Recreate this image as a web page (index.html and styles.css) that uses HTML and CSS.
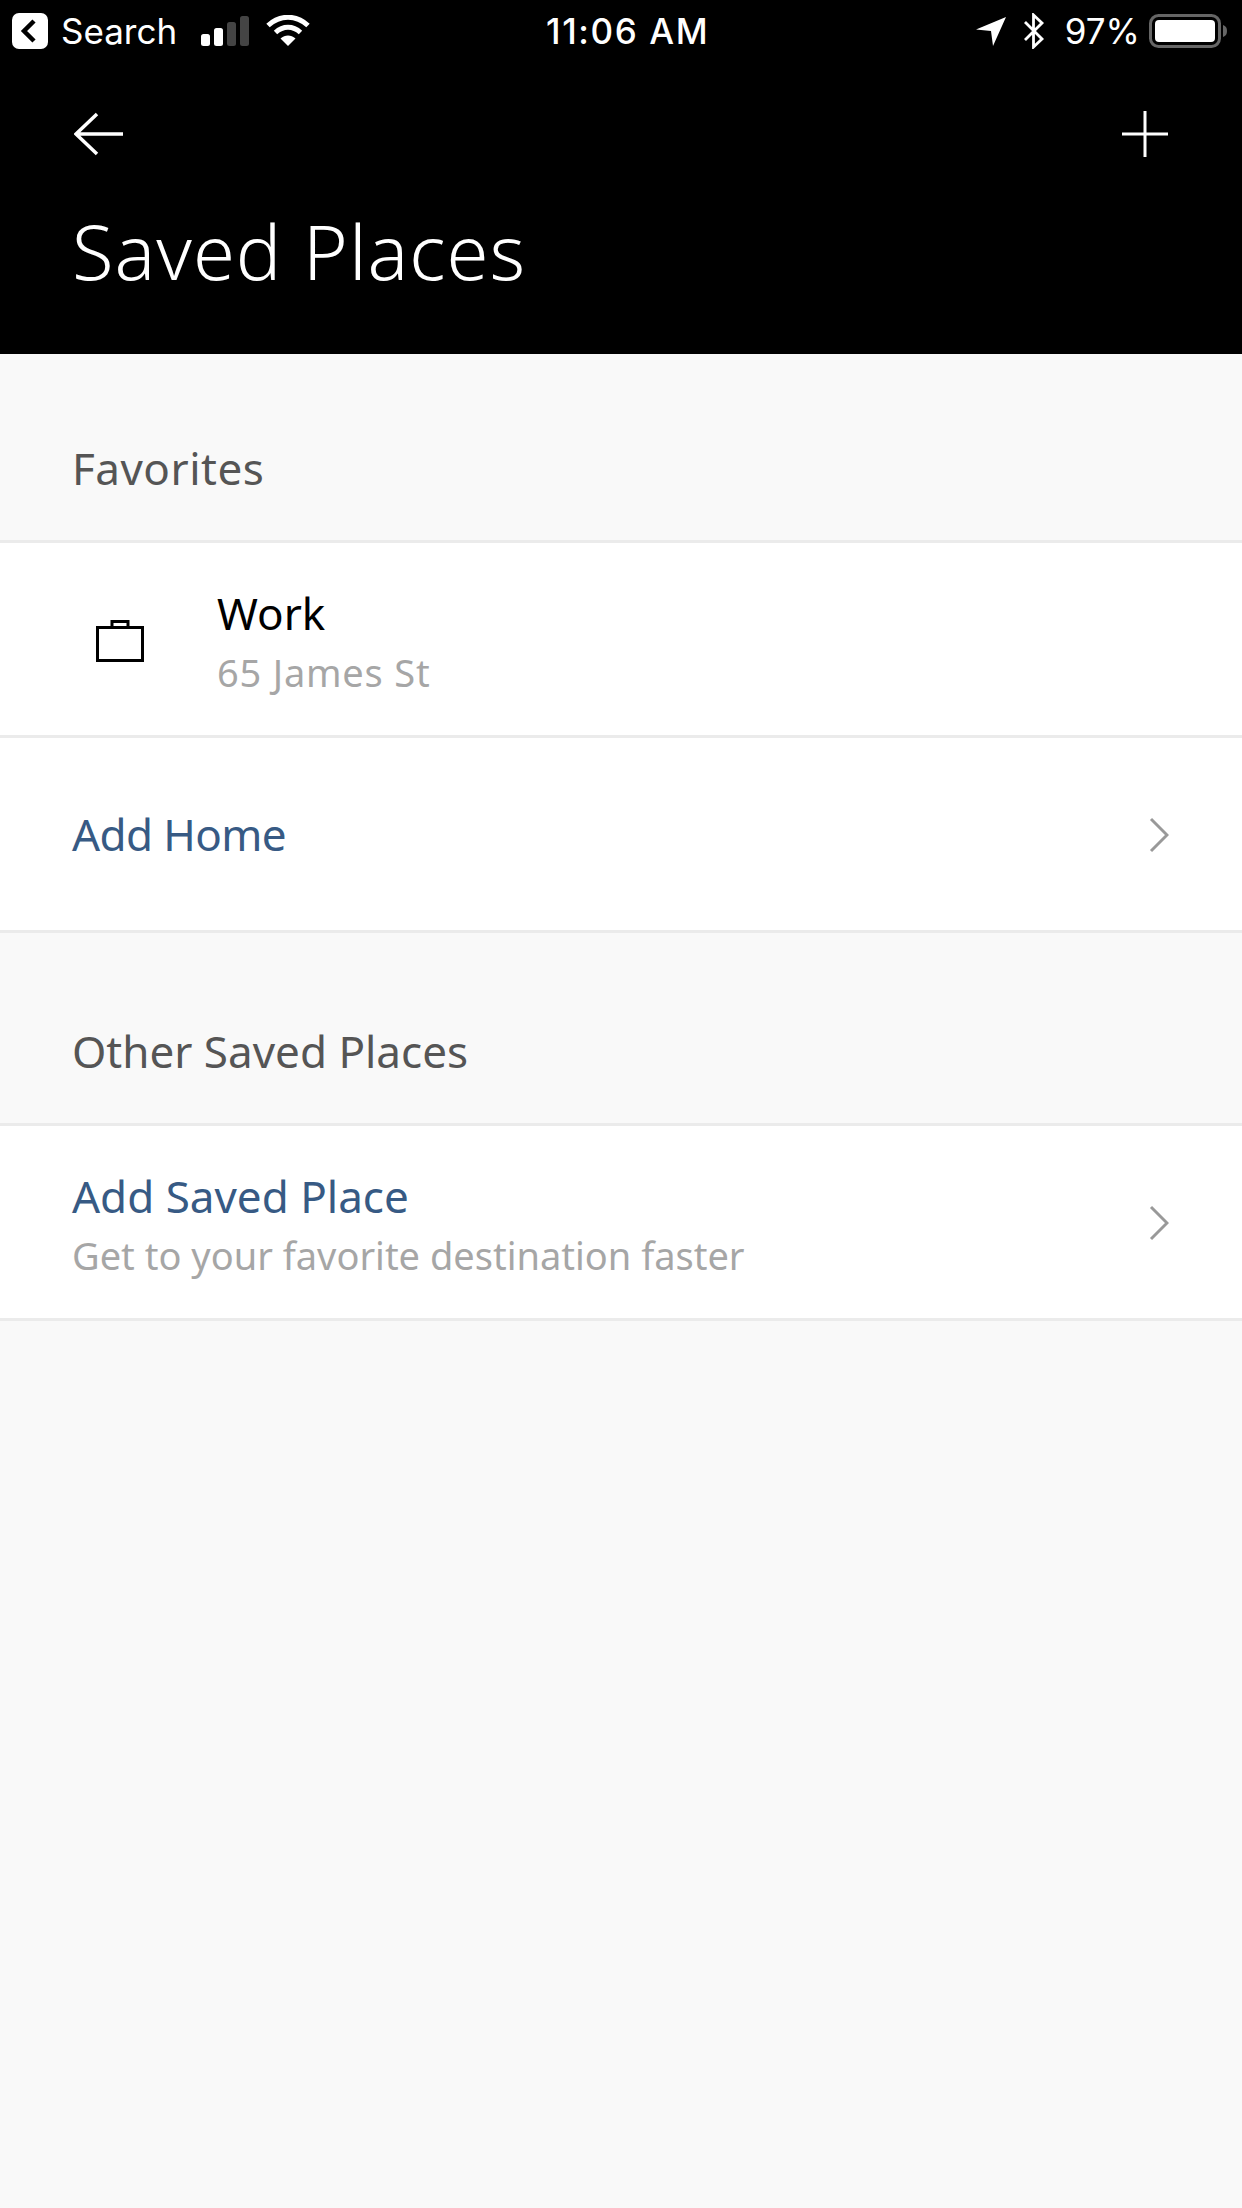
FILE: index.html
```html
<!DOCTYPE html>
<html lang="en">
<head>
<meta charset="utf-8">
<title>Saved Places</title>
<link rel="stylesheet" href="styles.css">
</head>
<body>
<header class="header">
  <div class="status">
    <div class="status-left">
      <svg class="ic-back" viewBox="0 0 36 36"><rect width="36" height="36" rx="7" fill="#fff"/><path d="M22 8 12 18l10 10" fill="none" stroke="#000" stroke-width="4.5"/></svg>
      <span class="status-text search">Search</span>
      <svg class="ic-signal" viewBox="0 0 48 30"><rect x="0" y="18" width="9" height="12" rx="2.5" fill="#fff"/><rect x="13" y="12" width="9" height="18" rx="2.5" fill="#fff"/><rect x="26" y="6" width="9" height="24" rx="2.5" fill="#444"/><rect x="39" y="0" width="9" height="30" rx="2.5" fill="#444"/></svg>
      <svg class="ic-wifi" viewBox="0 0 44 32"><path d="M2 10.500C14-.5 30-.5 42 10.500" fill="none" stroke="#fff" stroke-width="5"/><path d="M9.500 17.500C17 10.500 27 10.500 34.500 17.500" fill="none" stroke="#fff" stroke-width="5"/><path d="M22 31 14.500 23.500C19 19.500 25 19.500 29.500 23.500Z" fill="#fff"/></svg>
    </div>
    <span class="status-text time">11:06 AM</span>
    <div class="status-right">
      <svg class="ic-loc" viewBox="0 0 30 30"><path d="M0 13.500 30 1 17 30 15 15Z" fill="#fff"/></svg>
      <svg class="ic-bt" viewBox="0 0 22 36"><path d="M2 9 19 26 10.500 34V2L19 10 2 27" fill="none" stroke="#fff" stroke-width="2.800"/></svg>
      <span class="status-text pct">97%</span>
      <svg class="ic-batt" viewBox="0 0 78 34"><rect x="1.500" y="1.500" width="69" height="31" rx="8" fill="none" stroke="#666" stroke-width="3"/><rect x="6" y="6" width="60" height="22" rx="4" fill="#fff"/><path d="M74 11c3 1 4 3 4 6s-1 5-4 6Z" fill="#666"/></svg>
    </div>
  </div>
  <div class="nav">
    <svg class="ic-arrow" viewBox="0 0 50 44"><path d="M23 2 2 22l21 20M2 22h47" fill="none" stroke="#fff" stroke-width="3.500"/></svg>
    <svg class="ic-plus" viewBox="0 0 46 46"><path d="M23 0v46M0 23h46" fill="none" stroke="#fff" stroke-width="3"/></svg>
  </div>
  <h1 class="title">Saved Places</h1>
</header>
<main class="content">
  <h2 class="section first">Favorites</h2>
  <div class="row place">
    <svg class="ic-case" viewBox="0 0 48 42"><path d="M1.500 7.500h45v33h-45ZM16 7.500V1.500h16v6" fill="none" stroke="#000" stroke-width="3"/></svg>
    <div class="stack">
      <span class="primary">Work</span>
      <span class="secondary address">65 James St</span>
    </div>
  </div>
  <div class="row action">
    <span class="link home">Add Home</span>
    <svg class="ic-chev" viewBox="0 0 20 36"><path d="M2 2 18 18 2 34" fill="none" stroke="#999" stroke-width="3"/></svg>
  </div>
  <h2 class="section">Other Saved Places</h2>
  <div class="row action">
    <div class="stack">
      <span class="link">Add Saved Place</span>
      <span class="secondary">Get to your favorite destination faster</span>
    </div>
    <svg class="ic-chev" viewBox="0 0 20 36"><path d="M2 2 18 18 2 34" fill="none" stroke="#999" stroke-width="3"/></svg>
  </div>
</main>
</body>
</html>
```
FILE: styles.css
```css
* { box-sizing: border-box; }
html, body { margin: 0; padding: 0; }
body {
  width: 1242px;
  height: 2208px;
  overflow: hidden;
  background: #f9f9f9;
  font-family: "Noto Sans", "Open Sans", sans-serif;
}
.header {
  height: 354px;
  background: #000;
  color: #fff;
  display: flex;
  flex-direction: column;
}
.status {
  height: 62px;
  position: relative;
  display: flex;
  align-items: center;
  justify-content: space-between;
  padding: 0 12px;
}
.status-left, .status-right { display: flex; align-items: center; }
.status-text { font-family: Inter, "Liberation Sans", Arial, sans-serif; font-size: 35px; color: #fff; line-height: 1; }
.time { position: absolute; left: 546px; top: 14px; font-weight: 500; letter-spacing: 1.6px; }
.ic-back { width: 36px; height: 36px; }
.search { margin-left: 13px; }
.ic-signal { width: 48px; height: 30px; margin-left: 24px; }
.ic-wifi { width: 44px; height: 32px; margin-left: 17px; }
.ic-loc { width: 30px; height: 30px; }
.ic-bt { width: 22px; height: 36px; margin-left: 17px; }
.pct { margin-left: 20px; }
.ic-batt { width: 78px; height: 34px; margin-left: 9px; margin-right: 3px; }
.nav {
  height: 46px;
  margin-top: 49px;
  padding: 0 74px 0 74px;
  display: flex;
  align-items: center;
  justify-content: space-between;
}
.ic-arrow { width: 50px; height: 44px; }
.ic-plus { width: 46px; height: 46px; }
.title {
  margin: 48px 0 0;
  padding-left: 72px;
  font-size: 76px;
  font-weight: 300;
  letter-spacing: 1px;
  line-height: 92px;
  color: #fff;
}
.section {
  margin: 0;
  height: 193px;
  padding: 0 72px 44px;
  display: flex;
  align-items: flex-end;
  font-size: 44px;
  font-weight: 400;
  line-height: 56px;
  color: #555;
  border-bottom: 3px solid #ebebeb;
}
.section.first { height: 189px; letter-spacing: .5px; }
.row {
  height: 195px;
  background: #fff;
  border-bottom: 3px solid #ebebeb;
  display: flex;
  align-items: center;
}
.place { padding-left: 96px; }
.action { padding: 0 72px; justify-content: space-between; }
.ic-case { width: 48px; height: 42px; margin-right: 73px; margin-top: 3px; }
.stack { display: flex; flex-direction: column; padding-top: 4px; }
.primary, .link { font-size: 44px; line-height: 56px; }
.primary { color: #000; }
.link { color: #375a84; }
.home { letter-spacing: -.6px; }
.secondary { font-size: 38px; line-height: 50px; color: #a6a6a6; margin-top: 6px; }
.address { letter-spacing: .8px; }
.ic-chev { width: 20px; height: 36px; margin-right: 1px; margin-top: 2px; }
```
